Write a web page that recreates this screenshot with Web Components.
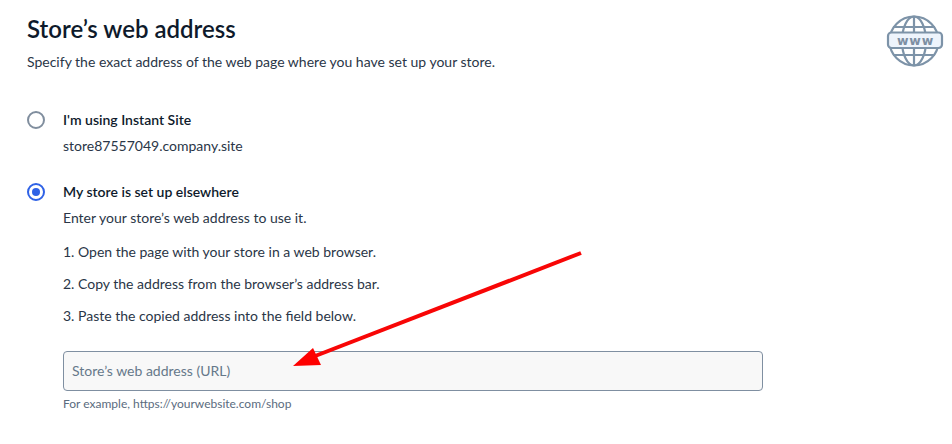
<!DOCTYPE html>
<html>
<head>
<meta charset="utf-8">
<style>
html, body { margin: 0; background: #fff; }
body { font-family: Lato, "Open Sans", sans-serif; color: #0e1a2b; }
</style>
</head>
<body>
<address-page>
  <radio-option label="I'm using Instant Site">
    <step-line tight>store87557049.company.site</step-line>
  </radio-option>
  <radio-option label="My store is set up elsewhere" checked>
    <step-line tight>Enter your store’s web address to use it.</step-line>
    <step-line first>1. Open the page with your store in a web browser.</step-line>
    <step-line>2. Copy the address from the browser’s address bar.</step-line>
    <step-line>3. Paste the copied address into the field below.</step-line>
    <url-field placeholder="Store’s web address (URL)" hint="For example, https://yourwebsite.com/shop"></url-field>
  </radio-option>
</address-page>
<script>
class AddressPage extends HTMLElement {
    constructor() {
        super();
        this._root = this.attachShadow({mode:'open'});
    }
    connectedCallback() {
        this._root.innerHTML = `
        <style>
        :host { display: block; position: relative; width: 952px; height: 444px; box-sizing: border-box; padding: 12px 0 0 27px; overflow: hidden; }
        h1 { margin: 0; font-size: 24px; line-height: 34px; font-weight: 600; color: #0e1a2b; }
        p { margin: 5px 0 0; font-size: 14px; line-height: 22px; color: #2a3647; }
        .options { margin-top: 36px; display: flex; flex-direction: column; gap: 24px; }
        .globe { position: absolute; left: 886px; top: 14px; }
        .arrow { position: absolute; left: 0; top: 0; pointer-events: none; }
        </style>
        <h1>Store’s web address</h1>
        <p>Specify the exact address of the web page where you have set up your store.</p>
        <div class="options"><slot></slot></div>
        <svg class="globe" width="58" height="54" viewBox="0 0 58 54" fill="none" stroke="#7d93a8" stroke-width="2.2">
            <circle cx="28" cy="27" r="24.5" fill="#fff"/>
            <ellipse cx="28" cy="27" rx="12" ry="24.5"/>
            <path d="M28 2.5v49M7 13h42M7 41h42"/>
            <rect x="2" y="18.5" width="54" height="15.5" rx="3.5" fill="#eef4fc"/>
            <text x="29.5" y="30.5" text-anchor="middle" font-family="'DejaVu Sans', sans-serif" font-weight="700" font-size="12.5" letter-spacing="0.8" fill="#7d8fa3" stroke="none">www</text>
        </svg>
        <svg class="arrow" width="952" height="444">
            <path d="M581 253L310 358" stroke="#f80606" stroke-width="4" fill="none"/>
            <path d="M293 366L313 348L321 365Z" fill="#fe0000"/>
        </svg>
        `;
    }
}
window.customElements.define('address-page', AddressPage);

class RadioOption extends HTMLElement {
    constructor() {
        super();
        this._root = this.attachShadow({mode:'open'});
    }
    connectedCallback() {
        const checked = this.hasAttribute('checked');
        this._root.innerHTML = `
        <style>
        :host { display: grid; grid-template-columns: 18px 1fr; column-gap: 18px; font-size: 14px; line-height: 22px; color: #2a3647; }
        .dot { width: 18px; height: 18px; box-sizing: border-box; border-radius: 50%; margin-top: 2px; position: relative;
               border: 2px solid ${checked ? '#2f62e6' : '#808e9e'}; }
        .dot.on::after { content: ''; position: absolute; left: 3px; top: 3px; width: 8px; height: 8px; border-radius: 50%; background: #2f62e6; }
        .label { font-weight: 600; color: #0e1a2b; font-size: 14px; }
        .body { grid-column: 2; }
        </style>
        <div class="dot ${checked ? 'on' : ''}"></div>
        <div class="label">${this.getAttribute('label')}</div>
        <div class="body"><slot></slot></div>
        `;
    }
}
window.customElements.define('radio-option', RadioOption);

class StepLine extends HTMLElement {
    constructor() {
        super();
        this._root = this.attachShadow({mode:'open'});
    }
    connectedCallback() {
        const top = this.hasAttribute('tight') ? 4 : this.hasAttribute('first') ? 12 : 10;
        this._root.innerHTML = `
        <style>
        :host { display: block; margin-top: ${top}px; font-size: 14px; line-height: 22px; color: #2a3647; }
        </style>
        <slot></slot>
        `;
    }
}
window.customElements.define('step-line', StepLine);

class UrlField extends HTMLElement {
    constructor() {
        super();
        this._root = this.attachShadow({mode:'open'});
    }
    connectedCallback() {
        this._root.innerHTML = `
        <style>
        :host { display: block; margin-top: 24px; width: 700px; }
        .box { height: 40px; box-sizing: border-box; border: 1px solid #7f8fa1; border-radius: 4px; background: #f8f8f8;
               padding: 0 8px; display: flex; align-items: center; font-size: 14px; color: #66788a; }
        .hint { margin-top: 5px; font-size: 12px; line-height: 16px; color: #5a6b7e; }
        </style>
        <div class="box">${this.getAttribute('placeholder')}</div>
        <div class="hint">${this.getAttribute('hint')}</div>
        `;
    }
}
window.customElements.define('url-field', UrlField);
</script>
</body>
</html>
